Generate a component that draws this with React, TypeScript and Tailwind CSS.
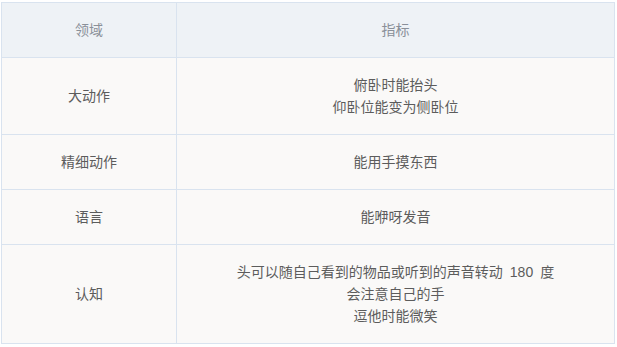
const rows = [
  { area: "大动作", items: ["俯卧时能抬头", "仰卧位能变为侧卧位"] },
  { area: "精细动作", items: ["能用手摸东西"] },
  { area: "语言", items: ["能咿呀发音"] },
  { area: "认知", items: ["头可以随自己看到的物品或听到的声音转动\u2002180\u2002度", "会注意自己的手", "逗他时能微笑"] },
];

export default function App() {
  return (
    <div className="w-[617px] h-[347px] bg-white pt-[2px] pl-[1px] font-['Liberation_Sans','Noto_Sans_CJK_SC',sans-serif] text-[14px] leading-[22px]">
      <table className="w-[614px] border-collapse table-fixed">
        <colgroup>
          <col className="w-[175px]" />
          <col />
        </colgroup>
        <thead>
          <tr className="bg-[#eef2f6] h-[55px]">
            <th className="border border-[#d9e3ef] font-normal text-[#8a9099] text-center">领域</th>
            <th className="border border-[#d9e3ef] font-normal text-[#8a9099] text-center">指标</th>
          </tr>
        </thead>
        <tbody>
          {rows.map((r) => (
            <tr key={r.area} className="bg-[#faf9f8]">
              <td className="border border-[#d9e3ef] text-center text-[#5c5c5c] py-4">{r.area}</td>
              <td className="border border-[#d9e3ef] text-center text-[#5c5c5c] py-4">
                {r.items.map((t) => (
                  <div key={t}>{t}</div>
                ))}
              </td>
            </tr>
          ))}
        </tbody>
      </table>
    </div>
  );
}
